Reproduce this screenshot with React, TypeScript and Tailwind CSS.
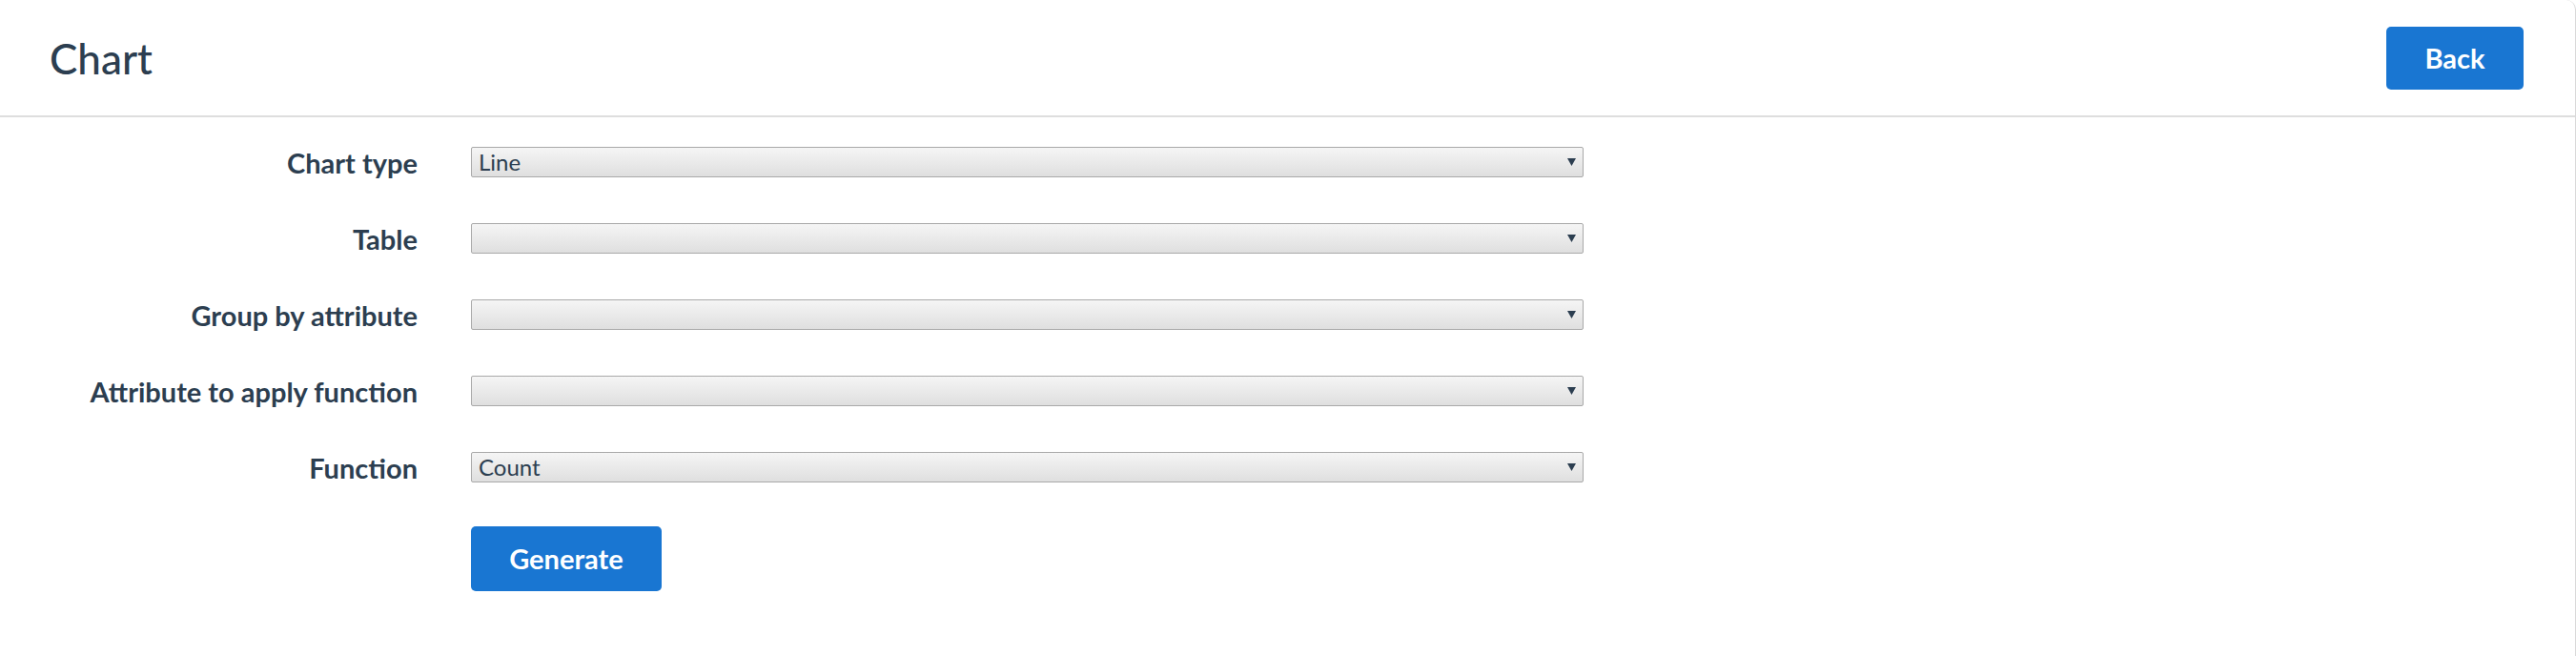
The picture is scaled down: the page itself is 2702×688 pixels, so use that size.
import React from "react";

const fields = [
    { label: "Chart type", value: "Line" },
    { label: "Table", value: "" },
    { label: "Group by attribute", value: "" },
    { label: "Attribute to apply function", value: "" },
    { label: "Function", value: "Count" },
];

function SelectBox({ value }: { value: string }) {
    return (
        <div className="relative w-[1167px] h-[32px]">
            <select
                defaultValue={value}
                className="appearance-none w-full h-full border border-[#a9a9a9] rounded-[2px] bg-gradient-to-b from-[#f5f5f5] to-[#dfdfdf] pl-[7px] pr-6 text-[24px] leading-none text-[#2c3e50] outline-none"
            >
                <option value={value}>{value}</option>
            </select>
            {/* dropdown arrow */}
            <svg
                className="absolute right-[8px] top-1/2 -translate-y-1/2 pointer-events-none"
                width="9"
                height="8"
                viewBox="0 0 9 8"
            >
                <polygon points="0,0 9,0 4.5,8" fill="#2c3e50" />
            </svg>
        </div>
    );
}

export default function App() {
    return (
        <div className="w-full min-h-[688px] bg-white font-['Lato',sans-serif] text-[#2c3e50]">
            <div className="min-h-[688px] border-r border-[#d9d9d9] rounded-tr-[10px]">

                {/* Header */}
                <div className="h-[123px] flex items-center justify-between pl-[52px] pr-[54px] border-b-2 border-[#dedede]">
                    <h1 className="text-[44px] font-medium leading-none">Chart</h1>
                    <button className="w-[144px] h-[66px] rounded-[5px] bg-[#1976d2] text-white text-[29px] font-bold">
                        Back
                    </button>
                </div>

                {/* Form */}
                <div className="pt-[31px] flex flex-col gap-[48px]">
                    {fields.map((f) => (
                        <div key={f.label} className="flex items-center gap-[56px]">
                            <label className="w-[438px] text-right text-[29px] font-bold leading-none">
                                {f.label}
                            </label>
                            <SelectBox value={f.value} />
                        </div>
                    ))}
                </div>

                <div className="pl-[494px] pt-[46px]">
                    <button className="w-[200px] h-[68px] rounded-[5px] bg-[#1976d2] text-white text-[29px] font-bold">
                        Generate
                    </button>
                </div>
            </div>
        </div>
    );
}
